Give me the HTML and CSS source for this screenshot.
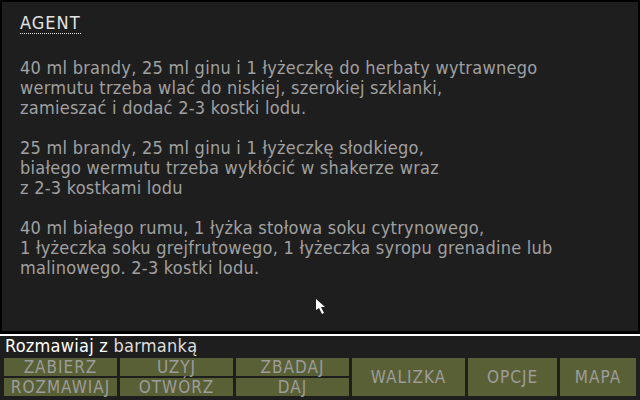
FILE: index.html
```html
<!DOCTYPE html>
<html lang="pl">

<head>
    <meta charset="UTF-8">
    <title>Agent</title>
    <link rel="stylesheet" href="styles.css">
</head>

<body>

    <div class="screen">
        <div class="panel">
            <span class="title">AGENT</span>

            <p>40 ml brandy, 25 ml ginu i 1 łyżeczkę do herbaty wytrawnego<br>
                wermutu trzeba wlać do niskiej, szerokiej szklanki,<br>
                zamieszać i dodać 2-3 kostki lodu.</p>

            <p>25 ml brandy, 25 ml ginu i 1 łyżeczkę słodkiego,<br>
                białego wermutu trzeba wykłócić w shakerze wraz<br>
                z 2-3 kostkami lodu</p>

            <p>40 ml białego rumu, 1 łyżka stołowa soku cytrynowego,<br>
                1 łyżeczka soku grejfrutowego, 1 łyżeczka syropu grenadine lub<br>
                malinowego. 2-3 kostki lodu.</p>

            <!-- mouse pointer -->
            <svg class="pointer" width="12" height="18" viewBox="0 0 12 18">
                <path d="M0 0 L0 11 L3 9 L6 15 L8 14 L5 8 L9 8 Z" fill="#fff"/>
            </svg>
        </div>

        <div class="bar">
            <div class="status">Rozmawiaj z <span class="hover">barmanką</span></div>

            <div class="actions">
                <button>ZABIERZ</button>
                <button>UZYJ</button>
                <button>ZBADAJ</button>
                <button class="big">WALIZKA</button>
                <button class="big">OPCJE</button>
                <button class="big">MAPA</button>
                <button>ROZMAWIAJ</button>
                <button>OTWÓRZ</button>
                <button>DAJ</button>
            </div>
        </div>
    </div>

</body>

</html>
```

FILE: styles.css
```css
body {
    margin: 0;
    background-color: #000;
    font-family: 'DejaVu Sans Condensed', 'DejaVu Sans', sans-serif;
    font-stretch: condensed;
    font-size: 18px;
    line-height: 20px;
    letter-spacing: 0.25px;
}

.screen {
    width: 640px;
    height: 400px;
    padding-top: 2px;
    box-sizing: border-box;
}

.panel {
    position: relative;
    margin: 0 2px;
    height: 329px;
    box-sizing: border-box;
    padding: 11px 18px;
    background-color: #1e1e1e;
    color: #a0a0a0;
}

.title {
    display: inline-block;
    color: #e4e4e4;
    letter-spacing: 1px;
    border-bottom: 1px dotted #e4e4e4;
}

.panel p {
    margin: 24px 0 0;
}

.panel p + p {
    margin-top: 20px;
}

.pointer {
    position: absolute;
    left: 314px;
    top: 297px;
}

.bar {
    margin-top: 3px;
    height: 66px;
    border-top: 2px solid #fff;
    background-color: #1e1e1e;
}

.status {
    padding-left: 5px;
    height: 22px;
    color: #fff;
}

.status .hover {
    color: #dedede;
}

.actions {
    display: grid;
    grid-template-columns: 113px 113px 113px 113px 89px 76px;
    grid-template-rows: 18px 18px;
    gap: 2px 3px;
    padding-left: 4px;
}

button {
    border: none;
    padding: 0;
    font-family: inherit;
    font-size: 17px;
    line-height: 18px;
    letter-spacing: 1px;
    color: #9c9c9c;
    background-color: #5a6035;
}

button.big {
    grid-row: span 2;
}
```
